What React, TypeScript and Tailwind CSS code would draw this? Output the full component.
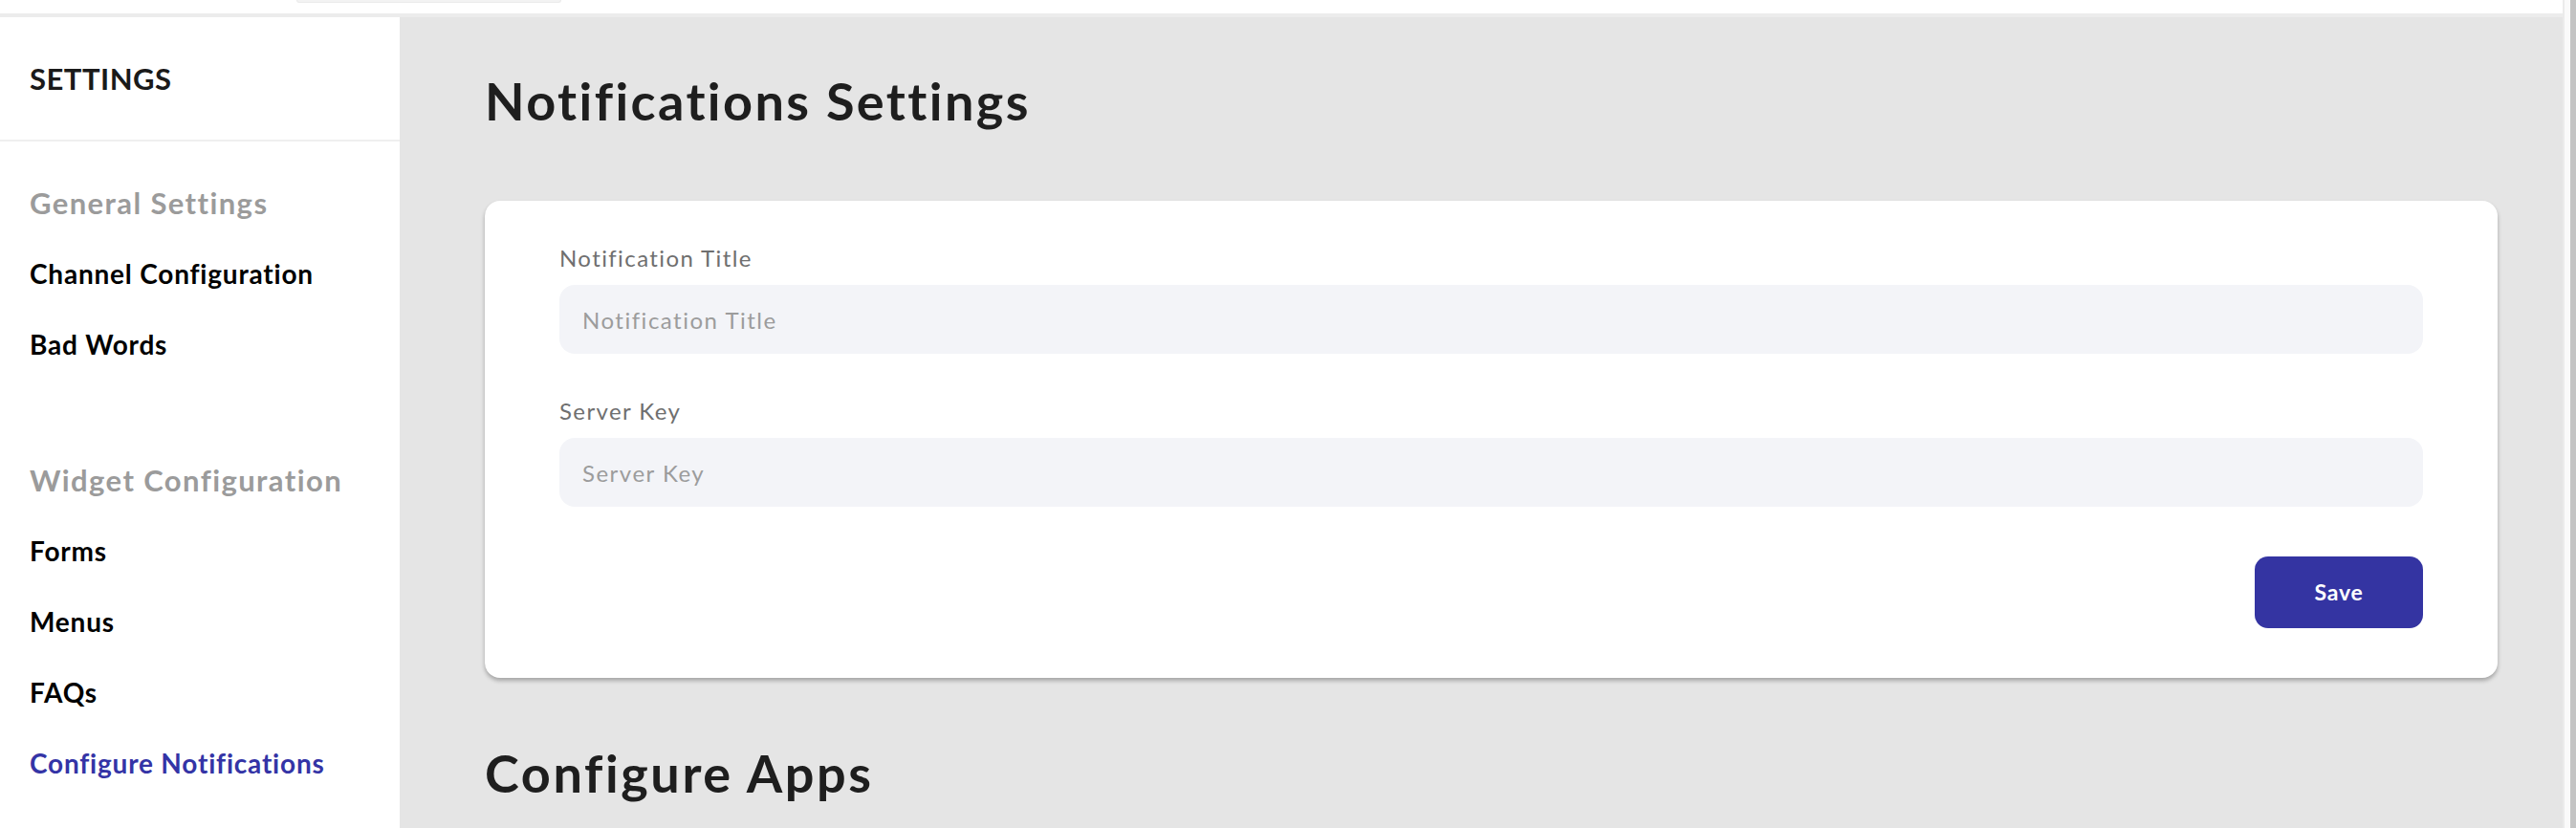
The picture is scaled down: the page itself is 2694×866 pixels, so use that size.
import React from 'react';

const font = { fontFamily: 'Lato, "Open Sans", sans-serif' };

const generalLinks = ['Channel Configuration', 'Bad Words'];
const widgetLinks = ['Forms', 'Menus', 'FAQs', 'Configure Notifications'];
const activeLink = 'Configure Notifications';

const NavGroup = ({ title, links }: { title: string; links: string[] }) => (
  <div className="flex flex-col">
    <div className="h-[74px] flex items-center px-[31px] text-[31px] font-bold tracking-[1.4px] text-[#9b9b9b]">
      {title}
    </div>
    {links.map((link) => (
      <a
        key={link}
        href="#"
        className={
          'h-[74px] flex items-center px-[31px] text-[28px] font-bold tracking-[0.8px] ' +
          (link === activeLink ? 'text-[#3434a6]' : 'text-black')
        }
      >
        {link}
      </a>
    ))}
  </div>
);

const Sidebar = () => (
  <aside className="w-[418px] shrink-0 bg-white flex flex-col">
    <div className="h-[128px] flex items-center px-[31px]">
      <span className="text-[31px] font-bold text-[#1a1a1a] tracking-[0.5px]">SETTINGS</span>
    </div>
    <div className="h-[2px] bg-[#efefef]" />
    <nav className="pt-[27px] flex flex-col gap-[68px]">
      <NavGroup title="General Settings" links={generalLinks} />
      <NavGroup title="Widget Configuration" links={widgetLinks} />
    </nav>
  </aside>
);

const Field = ({ label }: { label: string }) => (
  <div className="flex flex-col gap-[13px]">
    <label className="leading-[30px] text-[24px] tracking-[1.4px] text-[#6f6f6f]">{label}</label>
    <input
      placeholder={label}
      className="h-[72px] w-full rounded-[16px] bg-[#f3f4f8] px-[24px] text-[24px] tracking-[1.5px] text-[#333] placeholder:text-[#9c9c9c] outline-none"
      style={font}
    />
  </div>
);

const NotificationsCard = () => (
  <div className="bg-white rounded-[16px] shadow-[0_3px_4px_rgba(0,0,0,0.28)] px-[78px] pt-[45px] pb-[52px] flex flex-col">
    <div className="flex flex-col gap-[45px]">
      <Field label="Notification Title" />
      <Field label="Server Key" />
    </div>
    <div className="flex justify-end pt-[52px]">
      <button className="h-[75px] w-[176px] rounded-[14px] bg-[#3434a2] text-white text-[23px] font-bold tracking-[0.8px]">
        Save
      </button>
    </div>
  </div>
);

export default function App() {
  return (
    <div className="flex h-[866px] w-full overflow-hidden bg-white" style={font}>
      <div className="flex-1 flex flex-col min-w-0">
        <div className="h-[14px] bg-white">
          <div className="ml-[310px] w-[277px] h-[3px] rounded-b-[10px] bg-[#f3f3f3] border-b border-x border-[#ebebeb]" />
        </div>
        <div className="h-[4px] bg-[#ececec]" />
        <div className="flex-1 flex min-h-0">
          <Sidebar />
          <main className="flex-1 bg-[#e5e5e5] pl-[89px] pr-[68px] pt-[56px] flex flex-col">
            <h1 className="leading-[64px] text-[54px] font-bold tracking-[2.4px] text-[#1e1e1e]">
              Notifications Settings
            </h1>
            <div className="mt-[72px]">
              <NotificationsCard />
            </div>
            <h2 className="mt-[68px] leading-[64px] text-[54px] font-bold tracking-[2.6px] text-[#1e1e1e]">
              Configure Apps
            </h2>
          </main>
        </div>
      </div>
      <div className="w-[14px] shrink-0 flex">
        <div className="w-[2px] bg-[#ebebeb]" />
        <div className="w-[6px] bg-[#fafafa]" />
        <div className="w-[6px] bg-[#c4c4c4]" />
      </div>
    </div>
  );
}
